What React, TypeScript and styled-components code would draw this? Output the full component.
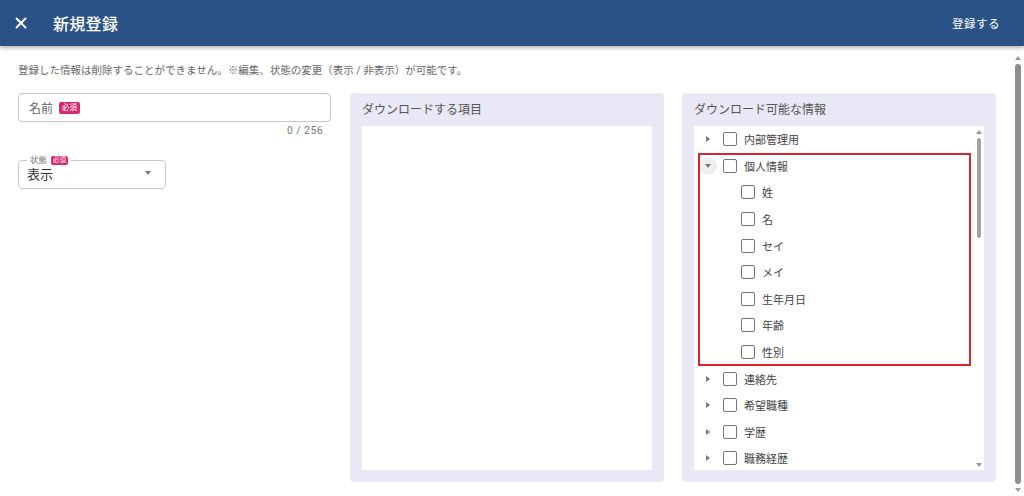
import React from "react";
import styled, { createGlobalStyle } from "styled-components";
import { X } from "lucide-react";

const GlobalStyle = createGlobalStyle`
  html, body { margin: 0; padding: 0; overflow: hidden; background: #fff; }
  body { font-family: Roboto, "Noto Sans CJK JP", "Noto Sans", sans-serif; color: #333; }
  * { box-sizing: border-box; }
`;

const Page = styled.div`
  width: 1024px; height: 496px; display: flex; flex-direction: column; overflow: hidden;
`;

const Header = styled.header`
  height: 46px; flex: none; background: #2b5286; color: #fff;
  display: flex; align-items: center; padding: 0 24px 0 11px;
  box-shadow: 0 2px 4px rgba(0, 0, 0, .3); position: relative; z-index: 2;
`;

const CloseButton = styled.button`
  width: 20px; height: 20px; padding: 0; border: none; background: transparent; color: #fff;
  display: flex; align-items: center; justify-content: center; margin-right: 22px;
`;

const Title = styled.h1`
  margin: 0; font-size: 16px; font-weight: 500; letter-spacing: .3px; flex: 1;
`;

const SubmitLink = styled.button`
  border: none; background: transparent; color: #fff; font-size: 11.5px; padding: 0;
  font-family: inherit; letter-spacing: .5px;
`;

const Body = styled.div`
  flex: 1; display: flex; min-height: 0;
`;

const Content = styled.main`
  flex: 1; padding: 17px 16px 0 18px;
`;

const Notice = styled.p`
  margin: 0 0 14px; font-size: 10.5px; line-height: 16px; color: #666;
`;

const Columns = styled.div`
  display: grid; grid-template-columns: 314px 314px 314px; column-gap: 18px; justify-content: start;
`;

const LeftColumn = styled.div`
  display: flex; flex-direction: column; padding-right: 1px;
`;

const TextBox = styled.div`
  height: 29px; border: 1px solid #c6c6c6; border-radius: 4px;
  display: flex; align-items: center; padding: 0 10px; gap: 6px;
`;

const Placeholder = styled.span`
  font-size: 12px; color: #666;
`;

const Badge = styled.span<{ $small?: boolean }>`
  display: inline-flex; align-items: center; justify-content: center;
  background: #d92a6e; color: #fff; border-radius: 2px;
  font-size: ${p => (p.$small ? "6.5px" : "7.5px")};
  height: ${p => (p.$small ? "9px" : "12px")};
  padding: 0 ${p => (p.$small ? "2px" : "3px")};
  line-height: 1;
`;

const Counter = styled.div`
  font-size: 10.5px; color: #777; text-align: right; padding-right: 8px; margin-top: 2px;
  line-height: 14px; letter-spacing: .4px;
`;

const SelectBox = styled.fieldset`
  width: 148px; height: 34px; margin: 17px 0 0; padding: 0 8px;
  border: 1px solid #c6c6c6; border-radius: 4px;
  display: flex; align-items: center;
`;

const Legend = styled.legend`
  font-size: 8.5px; color: #777; padding: 0 3px; line-height: 10px;
  display: flex; align-items: center; gap: 4px;
`;

const SelectValue = styled.span`
  font-size: 13px; color: #333; flex: 1; margin-top: -1px;
`;

const DropCaret = styled.span`
  width: 0; height: 0; border-left: 3.5px solid transparent; border-right: 3.5px solid transparent;
  border-top: 4px solid #777; margin-right: 6px; margin-top: -2px;
`;

const Panel = styled.section`
  height: 389px; background: #e8e9f4; border-radius: 4px; padding: 8px 12px 12px;
  display: flex; flex-direction: column;
`;

const PanelTitle = styled.h2`
  margin: 0; font-size: 12px; font-weight: 400; color: #555; line-height: 18px; height: 25px; flex: none;
`;

const WhiteBox = styled.div`
  flex: 1; background: #fff; display: flex; min-height: 0;
`;

const TreeList = styled.div`
  flex: 1; overflow: hidden;
`;

const Group = styled.div`
  position: relative;
  &::after {
    content: ""; position: absolute; left: 4px; right: 2px; top: 0; bottom: -1px;
    border: 2px solid #d8262e; pointer-events: none;
  }
`;

const Row = styled.div<{ $child?: boolean }>`
  height: 26.6px; display: flex; align-items: center;
  padding-left: ${p => (p.$child ? "47px" : "5px")};
`;

const Caret = styled.span<{ $open?: boolean }>`
  width: 18px; height: 18px; border-radius: 50%; flex: none; margin-right: 6px;
  display: flex; align-items: center; justify-content: center;
  background: ${p => (p.$open ? "#efefef" : "transparent")};
  &::before {
    content: ""; width: 0; height: 0;
    ${p => p.$open
      ? "border-left: 3.5px solid transparent; border-right: 3.5px solid transparent; border-top: 4px solid #777;"
      : "border-top: 3.5px solid transparent; border-bottom: 3.5px solid transparent; border-left: 4px solid #777;"}
  }
`;

const Check = styled.span`
  width: 14px; height: 14px; border: 1.5px solid #757575; border-radius: 2px; flex: none; margin-right: 7px;
`;

const Label = styled.span`
  font-size: 11px; color: #444;
`;

const InnerScroll = styled.div`
  width: 11px; flex: none; display: flex; flex-direction: column; align-items: center;
  padding: 4px 0 3px;
`;

const ArrowUp = styled.span`
  width: 0; height: 0; border-left: 3px solid transparent; border-right: 3px solid transparent;
  border-bottom: 4px solid #999;
`;

const ArrowDown = styled.span`
  width: 0; height: 0; border-left: 3px solid transparent; border-right: 3px solid transparent;
  border-top: 4px solid #999; margin-top: auto;
`;

const Thumb = styled.span<{ $w: number; $h: number; $c: string }>`
  width: ${p => p.$w}px; height: ${p => p.$h}px; background: ${p => p.$c};
  border-radius: ${p => p.$w / 2}px; margin-top: 4px;
`;

const PageScroll = styled.div`
  width: 12px; flex: none; display: flex; flex-direction: column; align-items: center;
  padding: 10px 0 4px; background: #fff;
`;

type Node = { label: string; open?: boolean; children?: string[] };

const tree: Node[] = [
  { label: "内部管理用" },
  { label: "個人情報", open: true, children: ["姓", "名", "セイ", "メイ", "生年月日", "年齢", "性別"] },
  { label: "連絡先" },
  { label: "希望職種" },
  { label: "学歴" },
  { label: "職務経歴" },
];

function TreeRow({ node }: { node: Node }) {
  return (
    <Row>
      <Caret $open={node.open} />
      <Check />
      <Label>{node.label}</Label>
    </Row>
  );
}

export default function App() {
  return (
    <Page>
      <GlobalStyle />
      <Header>
        <CloseButton aria-label="close">
          <X size={18} strokeWidth={2.6} />
        </CloseButton>
        <Title>新規登録</Title>
        <SubmitLink>登録する</SubmitLink>
      </Header>
      <Body>
        <Content>
          <Notice>登録した情報は削除することができません。※編集、状態の変更（表示 / 非表示）が可能です。</Notice>
          <Columns>
            <LeftColumn>
              <TextBox>
                <Placeholder>名前</Placeholder>
                <Badge>必須</Badge>
              </TextBox>
              <Counter>0 / 256</Counter>
              <SelectBox>
                <Legend>状態 <Badge $small>必須</Badge></Legend>
                <SelectValue>表示</SelectValue>
                <DropCaret />
              </SelectBox>
            </LeftColumn>
            <Panel>
              <PanelTitle>ダウンロードする項目</PanelTitle>
              <WhiteBox />
            </Panel>
            <Panel>
              <PanelTitle>ダウンロード可能な情報</PanelTitle>
              <WhiteBox>
                <TreeList>
                  {tree.map(node =>
                    node.children ? (
                      <Group key={node.label}>
                        <TreeRow node={node} />
                        {node.children.map(c => (
                          <Row $child key={c}>
                            <Check />
                            <Label>{c}</Label>
                          </Row>
                        ))}
                      </Group>
                    ) : (
                      <TreeRow key={node.label} node={node} />
                    )
                  )}
                </TreeList>
                <InnerScroll>
                  <ArrowUp />
                  <Thumb $w={4} $h={100} $c="#a3a3a3" />
                  <ArrowDown />
                </InnerScroll>
              </WhiteBox>
            </Panel>
          </Columns>
        </Content>
        <PageScroll>
          <ArrowUp />
          <Thumb $w={6} $h={420} $c="#8d8d8d" />
          <ArrowDown />
        </PageScroll>
      </Body>
    </Page>
  );
}
